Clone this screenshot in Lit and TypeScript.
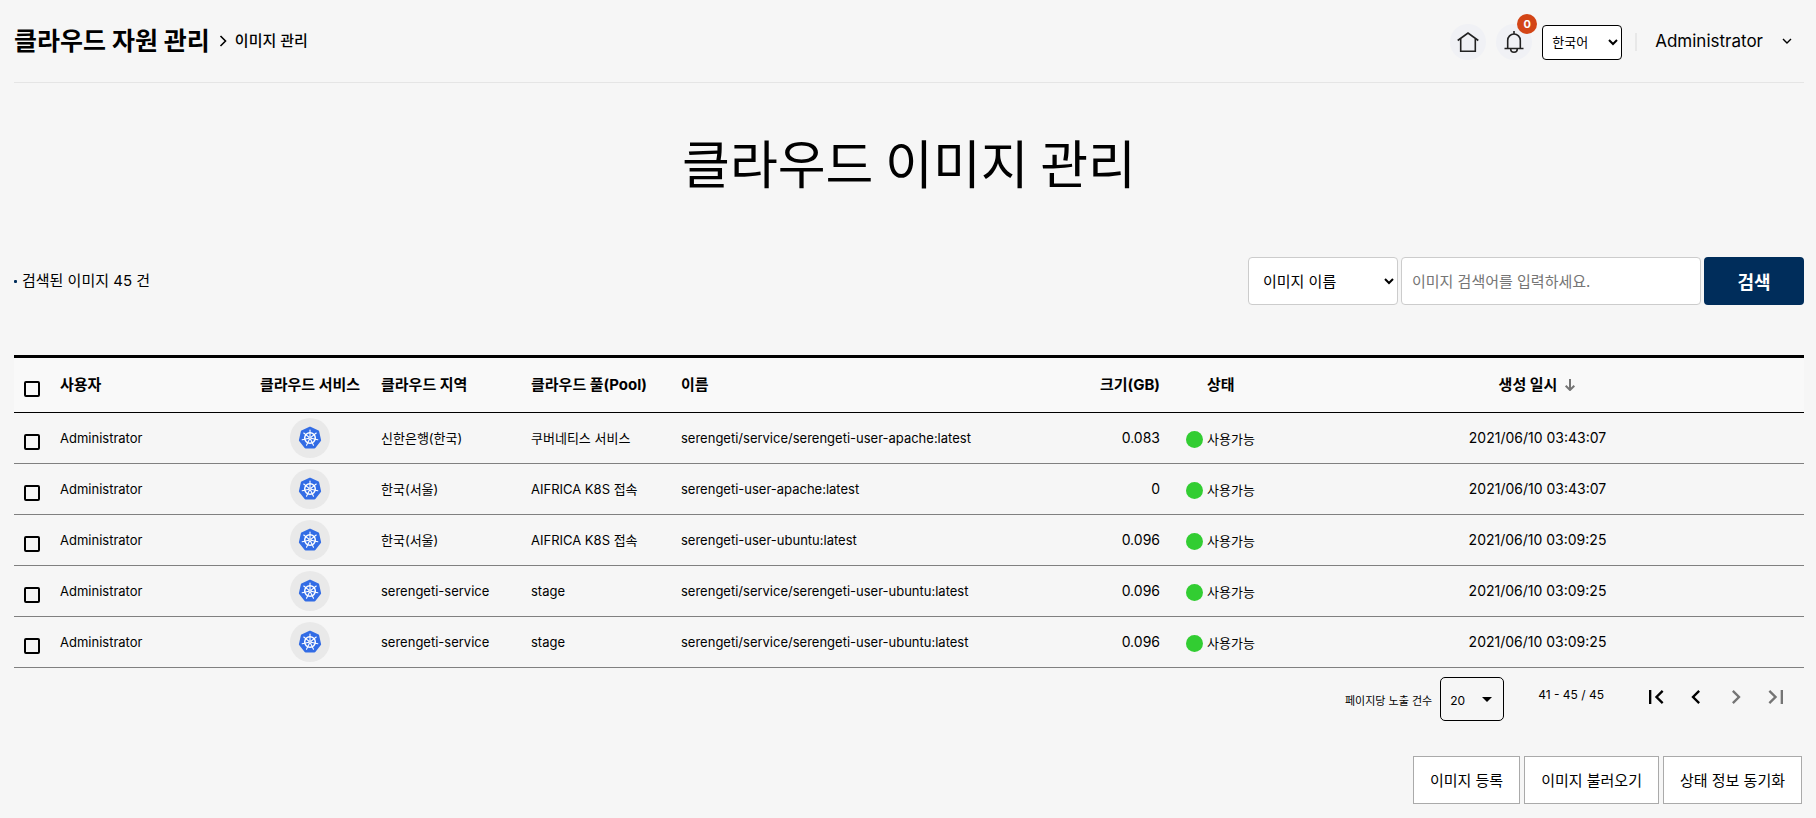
import { LitElement, html, svg, css } from "lit";
import { customElement, property } from "lit/decorators.js";

interface CloudImage {
  user: string;
  region: string;
  pool: string;
  name: string;
  size: string;
  created: string;
}

const IMAGES: CloudImage[] = [
  { user: "Administrator", region: "신한은행(한국)", pool: "쿠버네티스 서비스", name: "serengeti/service/serengeti-user-apache:latest", size: "0.083", created: "2021/06/10 03:43:07" },
  { user: "Administrator", region: "한국(서울)", pool: "AIFRICA K8S 접속", name: "serengeti-user-apache:latest", size: "0", created: "2021/06/10 03:43:07" },
  { user: "Administrator", region: "한국(서울)", pool: "AIFRICA K8S 접속", name: "serengeti-user-ubuntu:latest", size: "0.096", created: "2021/06/10 03:09:25" },
  { user: "Administrator", region: "serengeti-service", pool: "stage", name: "serengeti/service/serengeti-user-ubuntu:latest", size: "0.096", created: "2021/06/10 03:09:25" },
  { user: "Administrator", region: "serengeti-service", pool: "stage", name: "serengeti/service/serengeti-user-ubuntu:latest", size: "0.096", created: "2021/06/10 03:09:25" },
];

const base = css`
  *, *::before, *::after { box-sizing: border-box; }
  button, input, select { font: inherit; color: inherit; margin: 0; }
  button { padding: 0; border: 0; background: none; cursor: pointer; }
  svg { display: block; }
`;

const SPOKES = [0, 1, 2, 3, 4, 5, 6].map((i) => (i * 360) / 7);

@customElement("kube-badge")
class KubeBadge extends LitElement {
  static styles = css`
    :host { display: flex; align-items: center; justify-content: center; width: 40px; height: 40px; margin: 0 auto; border-radius: 50%; background: #e9e9e9; }
    svg { display: block; }
  `;
  render() {
    return html`<svg width="24" height="24" viewBox="-12 -12 24 24" role="img" aria-label="Kubernetes">
      <path d="M0-10.1 8-6.3 9.9 2.2 4.4 9.2H-4.4L-9.9 2.2-8-6.3Z" fill="#326ce5" stroke="#326ce5" stroke-width="2.4" stroke-linejoin="round"/>
      <circle r="5.3" fill="none" stroke="#fff" stroke-width="1.5"/>
      ${SPOKES.map((a) => svg`<path d="M0-1V-8" transform=${`rotate(${a})`} stroke="#fff" stroke-width="1.1" stroke-linecap="round"/>`)}
      <circle r="1.6" fill="#fff"/>
      <circle r=".6" fill="#326ce5"/>
    </svg>`;
  }
}

@customElement("page-header")
class PageHeader extends LitElement {
  static styles = [base, css`
    :host { display: block; }
    .bar { display: flex; align-items: center; justify-content: space-between; height: 83px; border-bottom: 1px solid #e5e5e5; }
    .crumbs { display: flex; align-items: center; }
    .section { font-size: 25px; line-height: 36px; font-weight: 700; }
    .sep { margin: 0 8px 0 9px; }
    .current { font-size: 15px; line-height: 24px; font-weight: 500; }
    .tools { display: flex; align-items: center; padding-top: 2px; }
    .round { position: relative; display: flex; align-items: center; justify-content: center; width: 36px; height: 36px; margin-right: 10px; border-radius: 50%; background: #f0f1f5; color: #222; }
    .count { position: absolute; top: -10px; right: -5px; width: 20px; height: 20px; border-radius: 50%; background: #d34516; color: #fff; font-size: 11px; line-height: 20px; font-weight: 700; text-align: center; }
    .lang { width: 80px; height: 35px; padding: 0 0 0 5px; border: 1px solid #000; border-radius: 4px; background: #fff; font-size: 13px; color: #000; }
    .rule { width: 2px; height: 18px; margin: 0 18px 0 13px; background: #e8e8e8; }
    .user { display: flex; align-items: center; gap: 19px; margin-right: 12px; padding-bottom: 2px; font-size: 17px; line-height: 24px; }
  `];
  render() {
    return html`<header class="bar">
      <div class="crumbs">
        <span class="section">클라우드 자원 관리</span>
        <svg class="sep" width="8" height="12" viewBox="0 0 8 12" fill="none" stroke="#000" stroke-width="1.6" aria-hidden="true"><path d="M1.5 1 6.5 6l-5 5"/></svg>
        <span class="current">이미지 관리</span>
      </div>
      <div class="tools">
        <a class="round" href="#" aria-label="홈">
          <svg width="24" height="24" viewBox="0 0 24 24" fill="none" stroke="currentColor" stroke-width="1.6"><path d="M1.700 10.500 12 3l10.300 7.500M4.700 9v12.200h14.600V9"/></svg>
        </a>
        <button class="round" type="button" aria-label="알림">
          <svg width="24" height="24" viewBox="0 0 24 24" fill="none" stroke="currentColor" stroke-width="1.6"><path d="M12 1v3M5.700 18.500V10.300a6.300 6.300 0 0 1 12.600 0v8.200M2.500 18.500h19M8.700 19a3.300 3.300 0 0 0 6.600 0"/></svg>
          <span class="count">0</span>
        </button>
        <select class="lang" aria-label="언어"><option>한국어</option></select>
        <span class="rule"></span>
        <button class="user" type="button">Administrator
          <svg width="10" height="6" viewBox="0 0 10 6" fill="none" stroke="#000" stroke-width="1.400" aria-hidden="true"><path d="m1 1 4 4 4-4"/></svg>
        </button>
      </div>
    </header>`;
  }
}

@customElement("image-search")
class ImageSearch extends LitElement {
  static styles = [base, css`
    :host { display: flex; align-items: center; justify-content: space-between; font-size: 15px; }
    .total { display: flex; align-items: center; gap: 5px; margin: 0; line-height: 24px; }
    .total::before { content: ""; width: 3px; height: 3px; border-radius: 1px; background: #002d5b; }
    .form { display: flex; gap: 3px; }
    .field, .query { height: 48px; border: 1px solid #ccc; border-radius: 4px; background: #fff; color: #000; }
    .field { width: 150px; padding: 0 0 0 10px; }
    .query { width: 300px; padding: 0 10px; }
    .query::placeholder { color: #757575; }
    .go { width: 100px; height: 48px; border-radius: 4px; background: #002d5b; color: #fff; font-size: 18px; font-weight: 700; }
  `];
  render() {
    return html`
      <p class="total">검색된 이미지 45 건</p>
      <form class="form" @submit=${(e: Event) => e.preventDefault()}>
        <select class="field" aria-label="검색 항목"><option>이미지 이름</option></select>
        <input class="query" type="text" aria-label="검색어" placeholder="이미지 검색어를 입력하세요.">
        <button class="go" type="submit">검색</button>
      </form>`;
  }
}

@customElement("image-table")
class ImageTable extends LitElement {
  @property({ attribute: false }) images: CloudImage[] = [];

  static styles = [base, css`
    :host { display: block; }
    .grid { width: 100%; table-layout: fixed; border-collapse: separate; border-spacing: 0; border-top: 3px solid #000; font-size: 13px; line-height: 20px; }
    th, td { padding: 0 8px; text-align: left; white-space: nowrap; }
    th { height: 55px; border-bottom: 1px solid #000; background: #f9f9f9; font-size: 15px; font-weight: 700; }
    td { height: 51px; border-bottom: 1px solid #808080; }
    .check { width: 38px; padding: 7px 0 0 10px; }
    .owner { width: 195px; }
    .cloud { width: 126px; text-align: center; }
    .place { width: 150px; }
    .size { width: 128px; text-align: right; }
    .state { width: 99px; padding: 2px 0 0 18px; }
    th.state { padding: 0 0 0 39px; }
    .date { width: 30%; padding: 0 4px 0 8px; text-align: center; }
    td.size, td.date { font-size: 14px; }
    .box { display: block; appearance: none; width: 16px; height: 16px; border: 2px solid #000; border-radius: 2px; }
    .box:checked { background: #002d5b; }
    .status { display: flex; align-items: center; gap: 4px; }
    .dot { width: 17px; height: 17px; border-radius: 50%; background: #32cd32; }
    .sort { display: inline-flex; align-items: center; gap: 7px; }
  `];

  private box(label: string) {
    return html`<input class="box" type="checkbox" aria-label=${label}>`;
  }

  render() {
    return html`<table class="grid">
      <thead><tr>
        <th class="check">${this.box("전체 선택")}</th>
        <th class="owner">사용자</th>
        <th class="cloud">클라우드 서비스</th>
        <th class="place">클라우드 지역</th>
        <th class="place">클라우드 풀(Pool)</th>
        <th>이름</th>
        <th class="size">크기(GB)</th>
        <th class="state">상태</th>
        <th class="date"><button class="sort" type="button">생성 일시
          <svg width="12" height="12" viewBox="0 0 12 12" fill="none" stroke="#757575" stroke-width="2" aria-hidden="true"><path d="M6 0v11M1.700 6.700 6 11l4.300-4.300"/></svg></button></th>
      </tr></thead>
      <tbody>${this.images.map((row) => html`<tr>
        <td class="check">${this.box(row.name)}</td>
        <td>${row.user}</td>
        <td class="cloud"><kube-badge></kube-badge></td>
        <td>${row.region}</td>
        <td>${row.pool}</td>
        <td>${row.name}</td>
        <td class="size">${row.size}</td>
        <td class="state"><span class="status"><span class="dot"></span>사용가능</span></td>
        <td class="date">${row.created}</td>
      </tr>`)}</tbody>
    </table>`;
  }
}

@customElement("page-controls")
class PageControls extends LitElement {
  static styles = [base, css`
    :host { display: flex; justify-content: flex-end; align-items: flex-start; padding: 9px 8px 0 0; font-size: 12px; line-height: 16px; }
    .per { display: flex; align-items: center; gap: 8px; }
    .caption { padding-top: 4px; font-size: 11px; }
    .picker { display: grid; align-items: center; }
    .count { grid-area: 1 / 1; appearance: none; width: 64px; height: 44px; padding: 4px 0 0 9px; border: 1px solid #000; border-radius: 5px; background: transparent; font-size: 12px; }
    .arrow { grid-area: 1 / 1; justify-self: end; margin-right: 12px; pointer-events: none; }
    .range { margin: 10px 32px 0 34px; }
    .nav { display: flex; }
    .step { display: flex; align-items: center; justify-content: center; width: 40px; height: 40px; color: #000; }
    .step:disabled { color: #757575; }
  `];

  private step(label: string, d: string, disabled = false) {
    return html`<button class="step" type="button" aria-label=${label} ?disabled=${disabled}>
      <svg width="28" height="28" viewBox="0 0 24 24" fill="currentColor"><path d=${d}/></svg>
    </button>`;
  }

  render() {
    return html`
      <div class="per">
        <label class="caption" for="per-page">페이지당 노출 건수</label>
        <span class="picker">
          <select class="count" id="per-page"><option>20</option></select>
          <svg class="arrow" width="10" height="5" viewBox="0 0 10 5" aria-hidden="true"><path d="M0 0h10L5 5z"/></svg>
        </span>
      </div>
      <span class="range">41 - 45 / 45</span>
      <div class="nav">
        ${this.step("첫 페이지", "M18.41 16.590 13.820 12l4.590-4.590L17 6l-6 6 6 6zM6 6h2v12H6z")}
        ${this.step("이전 페이지", "M15.410 7.410 14 6l-6 6 6 6 1.410-1.410L10.830 12z")}
        ${this.step("다음 페이지", "M10 6 8.590 7.410 13.170 12l-4.580 4.590L10 18l6-6z", true)}
        ${this.step("마지막 페이지", "M5.590 7.410 10.180 12l-4.590 4.590L7 18l6-6-6-6zM16 6h2v12h-2z", true)}
      </div>`;
  }
}

@customElement("app-root")
class AppRoot extends LitElement {
  static styles = [base, css`
    :host { display: block; min-height: 100vh; padding: 0 12px 14px 14px; background: #f6f6f6; color: #000; font-family: Inter, "Noto Sans CJK KR", sans-serif; font-size: 15px; }
    .title { margin: 41px 0 57px; font-family: "Noto Sans CJK KR", sans-serif; font-size: 52px; line-height: 76px; font-weight: 400; text-align: center; }
    .list { margin-top: 50px; }
    .actions { display: flex; justify-content: flex-end; gap: 4px; margin: 35px 2px 0 0; }
    .action { height: 48px; padding: 0 16px 2px; border: 1px solid #aaa; background: #fff; font-size: 15px; }
  `];
  render() {
    return html`
      <page-header></page-header>
      <main>
        <h1 class="title">클라우드 이미지 관리</h1>
        <image-search></image-search>
        <image-table class="list" .images=${IMAGES}></image-table>
        <page-controls></page-controls>
        <div class="actions">
          <button class="action" type="button">이미지 등록</button>
          <button class="action" type="button">이미지 불러오기</button>
          <button class="action" type="button">상태 정보 동기화</button>
        </div>
      </main>`;
  }
}
